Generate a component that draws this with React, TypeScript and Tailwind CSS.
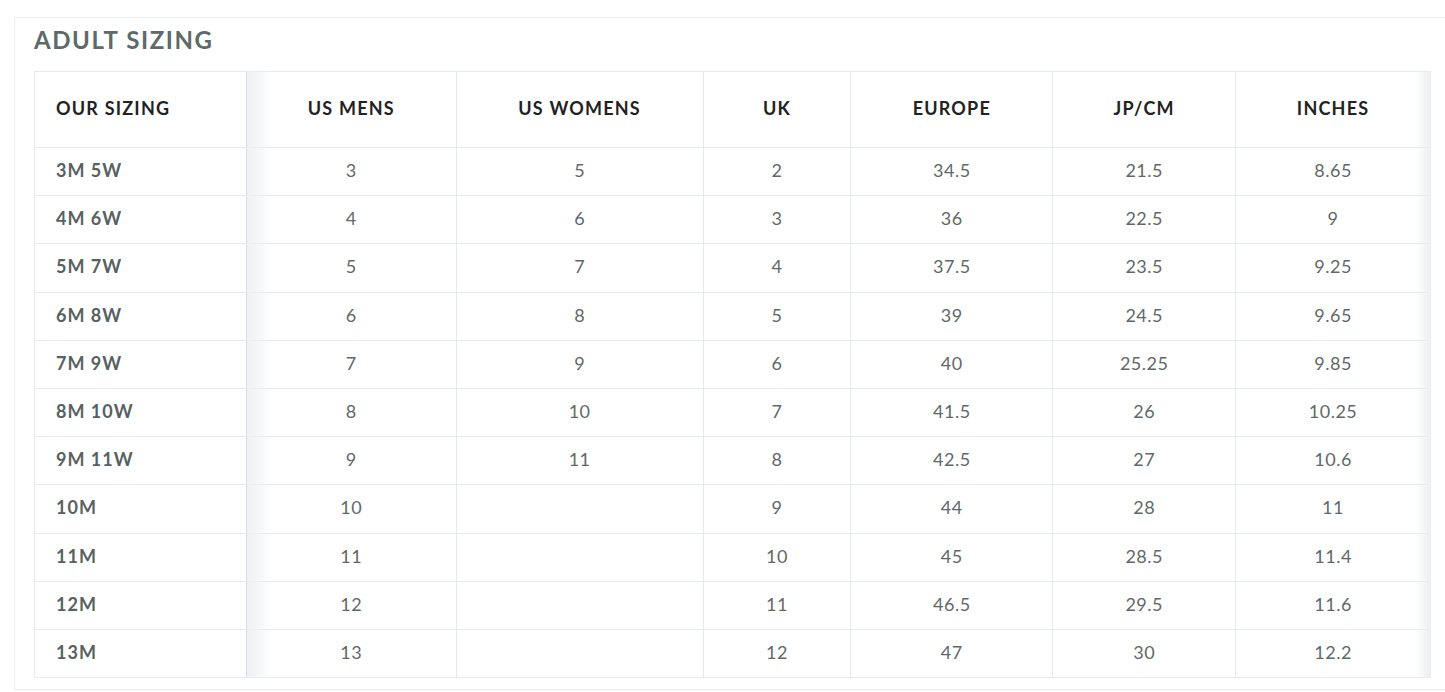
import React from "react";

const cols = ["OUR SIZING", "US MENS", "US WOMENS", "UK", "EUROPE", "JP/CM", "INCHES"];
const widths = ["w-[212px]", "w-[210px]", "w-[247px]", "w-[148px]", "w-[202px]", "w-[183px]", "w-[195px]"];
const rows: string[][] = [
  ["3M 5W", "3", "5", "2", "34.5", "21.5", "8.65"],
  ["4M 6W", "4", "6", "3", "36", "22.5", "9"],
  ["5M 7W", "5", "7", "4", "37.5", "23.5", "9.25"],
  ["6M 8W", "6", "8", "5", "39", "24.5", "9.65"],
  ["7M 9W", "7", "9", "6", "40", "25.25", "9.85"],
  ["8M 10W", "8", "10", "7", "41.5", "26", "10.25"],
  ["9M 11W", "9", "11", "8", "42.5", "27", "10.6"],
  ["10M", "10", "", "9", "44", "28", "11"],
  ["11M", "11", "", "10", "45", "28.5", "11.4"],
  ["12M", "12", "", "11", "46.5", "29.5", "11.6"],
  ["13M", "13", "", "12", "47", "30", "12.2"],
];

export default function App() {
  return (
    <div className="w-[1445px] h-[692px] overflow-hidden bg-white font-['Lato','Noto_Sans',sans-serif]">
      <div className="ml-[14px] mt-[17px] h-[673px] border-l border-t border-b border-[#eceeee] pl-[19px] pt-[8px]">
        <h2 className="text-[24px] font-bold leading-[28px] tracking-[1.6px] text-[#5e6a6a]">ADULT SIZING</h2>
        <div className="relative mt-[17px] w-[1397px]">
          <table className="table-fixed border-collapse">
            <colgroup>
              {widths.map((w, i) => (
                <col key={i} className={w} />
              ))}
            </colgroup>
            <thead>
              <tr className="h-[76px]">
                {cols.map((c, i) => (
                  <th
                    key={c}
                    className={`border border-[#e4eaee] pb-[3px] text-[18px] font-bold tracking-[1.2px] text-[#1f2323] ${
                      i === 0 ? "text-left pl-[21px] border-r-[#d6dde3]" : "text-center"
                    }`}
                  >
                    {c}
                  </th>
                ))}
              </tr>
            </thead>
            <tbody>
              {rows.map((r, ri) => (
                <tr key={ri} className="h-[48.2px]">
                  {r.map((v, i) => (
                    <td
                      key={i}
                      className={`border border-[#e4eaee] pb-[2px] text-[18px] ${
                        i === 0
                          ? "text-left pl-[21px] font-bold tracking-[1px] text-[#566262] border-r-[#d6dde3]"
                          : "text-center tracking-[0.5px] text-[#5f6969]"
                      }`}
                    >
                      {v}
                    </td>
                  ))}
                </tr>
              ))}
            </tbody>
          </table>
          <div className="pointer-events-none absolute top-0 bottom-0 left-[213px] w-[26px] bg-gradient-to-r from-[#eef0f2] to-transparent" />
          <div className="pointer-events-none absolute top-0 bottom-0 right-0 w-[16px] bg-gradient-to-l from-[#eceef0] to-transparent" />
        </div>
      </div>
    </div>
  );
}
